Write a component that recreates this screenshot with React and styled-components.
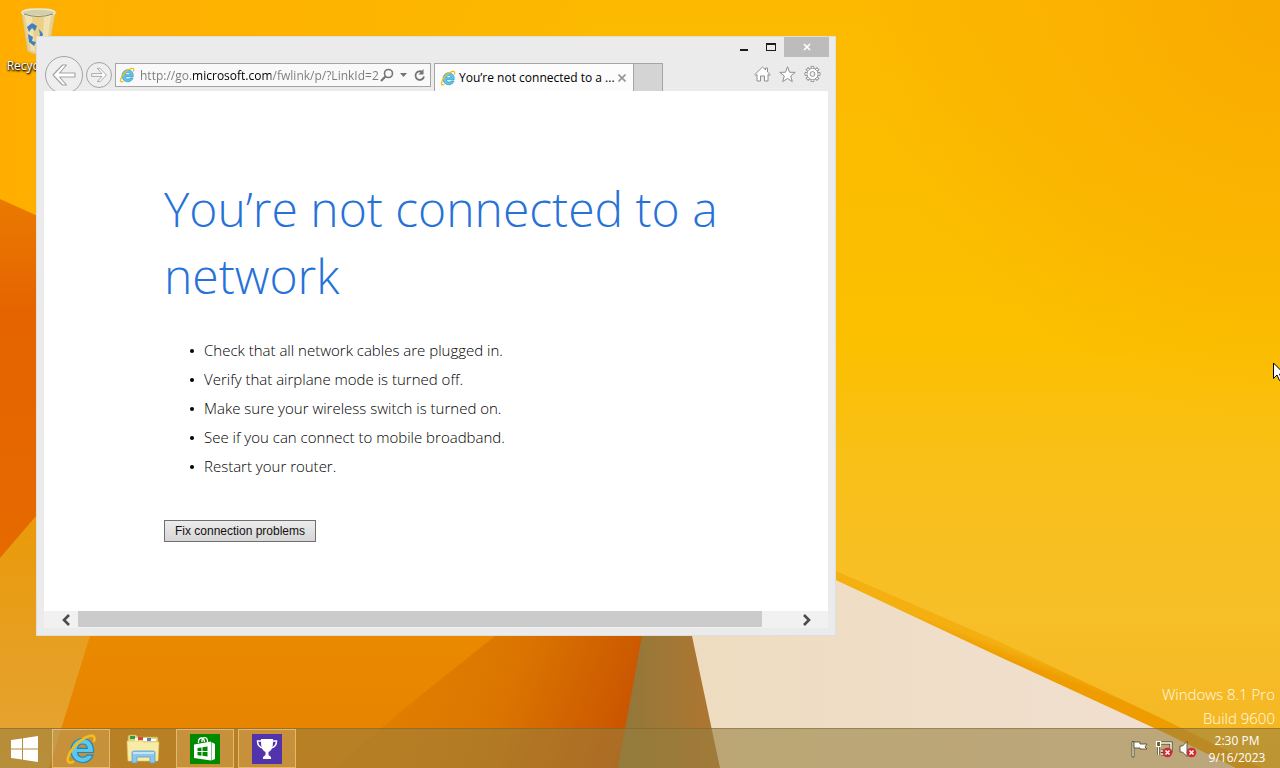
import React from "react";
import styled, { createGlobalStyle } from "styled-components";

const GlobalStyle = createGlobalStyle`
  *, *::before, *::after { box-sizing: border-box; }
  html, body { margin: 0; height: 100%; }
  body { font-family: "Open Sans", "Noto Sans", sans-serif; font-size: 12px; overflow: hidden; }
  button, input { font: inherit; margin: 0; padding: 0; border: 0; background: none; }
  h1, ul, p { margin: 0; padding: 0; }
  svg { display: block; flex: none; }
`;

const Screen = styled.div`
  position: relative;
  isolation: isolate;
  display: flex;
  flex-direction: column;
  min-height: 100vh;
  overflow: hidden;
`;

const WallpaperArt = styled.svg`
  position: absolute;
  inset: 0;
  z-index: -1;
  width: 100%;
  height: 100%;
`;

const Desktop = styled.main`
  position: relative;
  flex: 1;
`;

const DesktopIcon = styled.button`
  display: flex;
  flex-direction: column;
  align-items: center;
  gap: 2px;
  width: 76px;
  padding-top: 6px;
  color: #fff;
  line-height: 16px;
  text-shadow: 0 1px 2px #000, 1px 1px 2px #000;
`;

const Window = styled.section`
  position: absolute;
  left: 36px;
  top: 36px;
  width: 800px;
  display: flex;
  flex-direction: column;
  padding: 0 7px 7px;
  background: #ebebeb;
  border: 1px solid #dedede;
`;

const TitleBar = styled.header`
  display: flex;
  justify-content: flex-end;
  height: 18px;
  margin-right: -1px;
`;

const CaptionButton = styled.button`
  display: grid;
  place-items: center;
  width: ${(p) => (p.$close ? 45 : 27)}px;
  height: 20px;
  color: ${(p) => (p.$close ? "#fff" : "#1c1c1c")};
  background: ${(p) => (p.$close ? "#bcbcbc" : "transparent")};
`;

const Toolbar = styled.div`
  display: flex;
  align-items: flex-start;
  height: 36px;
  padding-top: 8px;
  overflow: hidden;
`;

const NavButtons = styled.div`
  display: flex;
  align-items: center;
  gap: 3px;
  width: 71px;
  height: 24px;
  padding-left: 1px;
`;

const NavButton = styled.button`
  display: grid;
  place-items: center;
  flex: none;
  width: ${(p) => p.$size}px;
  height: ${(p) => p.$size}px;
  border: 1px solid #a3a3a3;
  border-radius: 50%;
  background: #eeeeee;
`;

const AddressBar = styled.form`
  display: flex;
  align-items: center;
  width: 316px;
  height: 24px;
  margin-right: 3px;
  padding: 0 3px;
  background: #f9f9f9;
  border: 1px solid #a5a5a5;
`;

const AddressInput = styled.input`
  flex: 1;
  min-width: 0;
  height: 20px;
  margin-left: 5px;
  outline: 0;
  color: #6f6f6f;
  background: linear-gradient(90deg, #7a7a7a 52px, #000 52px 131px, #7a7a7a 131px);
  background-clip: text;
  -webkit-background-clip: text;
  -webkit-text-fill-color: transparent;
`;

const IconButton = styled.button`
  display: grid;
  place-items: center;
  width: ${(p) => p.$w || 16}px;
  height: 20px;
`;

const Tab = styled.div`
  display: flex;
  align-items: center;
  width: 200px;
  height: 28px;
  padding: 0 5px;
  background: #fcfcfc;
  border: 1px solid #a5a5a5;
  border-bottom: 0;
`;

const TabTitle = styled.span`
  flex: 1;
  min-width: 0;
  margin-left: 3px;
  overflow: hidden;
  white-space: nowrap;
  color: #000;
`;

const NewTab = styled.button`
  width: 29px;
  height: 28px;
  background: #d4d4d4;
  border: 1px solid #a5a5a5;
  border-left: 0;
  border-bottom: 0;
`;

const Commands = styled.nav`
  display: flex;
  gap: 8px;
  height: 22px;
  margin-left: auto;
  padding-right: 7px;
  align-items: center;
`;

const Page = styled.article`
  padding: 84px 100px 69px 120px;
  background: #fff;
`;

const Heading = styled.h1`
  color: #2672d9;
  font-size: 48px;
  font-weight: 300;
  line-height: 67px;
`;

const Tips = styled.ul`
  margin: 27px 0 39px;
  list-style: none;
  color: #000;
  font-size: 15px;
  font-weight: 300;
  line-height: 29px;
`;

const Tip = styled.li`
  display: flex;
  align-items: center;
  gap: 10px;
  padding-left: 26px;

  &::before {
    content: "";
    width: 4px;
    height: 4px;
    border-radius: 50%;
    background: #000;
  }
`;

const FixButton = styled.button`
  width: 152px;
  height: 22px;
  color: #111;
  font-family: "Liberation Sans", Arial, sans-serif;
  font-size: 12px;
  line-height: 18px;
  background: linear-gradient(#ececec, #d6d6d6);
  border: 1px solid #707070;
`;

const ScrollBar = styled.div`
  display: flex;
  height: 17px;
  padding: 0 9px;
  background: #f1f1f1;
`;

const ScrollTrack = styled.div`
  flex: 1;
  padding-right: 32px;
`;

const ScrollThumb = styled.div`
  height: 16px;
  background: #cbcbcb;
`;

const ScrollArrow = styled.button`
  display: grid;
  place-items: center;
  width: 25px;
  height: 17px;
`;

const Watermark = styled.div`
  position: absolute;
  right: 5px;
  bottom: -2px;
  color: #fffbe6;
  font-size: 15px;
  font-weight: 300;
  line-height: 24px;
  text-align: right;
`;

const Pointer = styled.svg`
  position: absolute;
  right: -6px;
  top: 362px;
`;

const Taskbar = styled.footer`
  display: flex;
  align-items: stretch;
  height: 40px;
  background: rgba(150, 126, 62, 0.58);
  border-top: 1px solid rgba(110, 90, 40, 0.45);
`;

const TaskButtons = styled.div`
  display: flex;
  flex: 1;
  gap: 4px;
`;

const StartButton = styled.button`
  display: grid;
  place-items: center;
  width: 48px;
`;

const TaskButton = styled.button`
  display: grid;
  place-items: center;
  width: 58px;
  height: 39px;
  border: 1px solid ${(p) => (p.$open ? "rgba(255, 225, 165, 0.5)" : "transparent")};
  background: ${(p) => (p.$open ? "rgba(255, 215, 150, 0.2)" : "transparent")};
`;

const Tray = styled.div`
  display: flex;
  align-items: center;
  gap: 6px;
  padding-right: 14px;
  color: #fff;
`;

const TrayButton = styled.button`
  width: 18px;
  height: 18px;
`;

const Clock = styled.button`
  width: 58px;
  margin-left: 5px;
  color: #fff;
  font-size: 12px;
  line-height: 17px;
  text-align: center;
  white-space: nowrap;
`;

function Wallpaper() {
  return (
    <WallpaperArt viewBox="0 0 1280 768" preserveAspectRatio="none" aria-hidden="true">
      <defs>
        <linearGradient id="sky" x1="0" y1="0" x2="0" y2="1">
          <stop offset="0" stopColor="#fcb900" />
          <stop offset=".45" stopColor="#fbc000" />
          <stop offset=".6" stopColor="#f9c018" />
          <stop offset=".8" stopColor="#f7bf28" />
          <stop offset="1" stopColor="#f4b524" />
        </linearGradient>
        <radialGradient id="corner" cx="1280" cy="0" r="420" gradientUnits="userSpaceOnUse">
          <stop offset="0" stopColor="#f9ab00" />
          <stop offset="1" stopColor="#f9ab00" stopOpacity="0" />
        </radialGradient>
        <linearGradient id="leftGlow" x1="0" y1="0" x2="600" y2="0" gradientUnits="userSpaceOnUse">
          <stop offset="0" stopColor="#ffae00" />
          <stop offset="1" stopColor="#ffae00" stopOpacity="0" />
        </linearGradient>
        <linearGradient id="leftFold" x1="0" y1="0" x2="0" y2="1">
          <stop offset="0" stopColor="#ea7a00" />
          <stop offset=".3" stopColor="#e56400" />
          <stop offset="1" stopColor="#e66a00" />
        </linearGradient>
        <linearGradient id="sand" x1="0" y1="0" x2="0" y2="1">
          <stop offset="0" stopColor="#ea9a05" />
          <stop offset=".3" stopColor="#ea9a0a" />
          <stop offset="1" stopColor="#e4a437" />
        </linearGradient>
        <linearGradient id="floor" x1="0" y1="0" x2="0" y2="1">
          <stop offset="0" stopColor="#ec9300" />
          <stop offset="1" stopColor="#e78200" />
        </linearGradient>
        <linearGradient id="shade" x1="430" y1="620" x2="650" y2="700" gradientUnits="userSpaceOnUse">
          <stop offset="0" stopColor="#e07e00" />
          <stop offset=".4" stopColor="#db7500" />
          <stop offset="1" stopColor="#c85200" />
        </linearGradient>
        <linearGradient id="brown" x1="628" y1="0" x2="700" y2="0" gradientUnits="userSpaceOnUse">
          <stop offset="0" stopColor="#93783a" />
          <stop offset="1" stopColor="#ab7632" />
        </linearGradient>
        <linearGradient id="cream" x1="0" y1="0" x2="1" y2="0">
          <stop offset="0" stopColor="#eedcc0" />
          <stop offset="1" stopColor="#f1e0d2" />
        </linearGradient>
        <linearGradient id="fold" x1="1000" y1="645" x2="996" y2="656" gradientUnits="userSpaceOnUse">
          <stop offset="0" stopColor="#f3b010" />
          <stop offset="1" stopColor="#ee9c00" />
        </linearGradient>
      </defs>
      <rect width="1280" height="768" fill="url(#sky)" />
      <rect width="1280" height="768" fill="url(#corner)" />
      <rect width="600" height="768" fill="url(#leftGlow)" />
      <path d="M0 199L80 235V480L0 570Z" fill="url(#leftFold)" />
      <path d="M0 558L36 516L120 420V768H0Z" fill="url(#sand)" />
      <path d="M140 480H692V768H49L90 636Z" fill="url(#floor)" />
      <path d="M495 636L400 712L335 768H700V500Z" fill="url(#shade)" />
      <path d="M660 530L642 636L618 768H722L670 530Z" fill="url(#brown)" />
      <path d="M670 530L692 636L720 768H1238L1165 731L836 580L760 545Z" fill="url(#cream)" />
      <path d="M836 571L1000 642L1165 720L1262 768H1236L1165 733L1000 657L836 580Z" fill="url(#fold)" />
    </WallpaperArt>
  );
}

function IeLogo({ size }) {
  return (
    <svg width={size} height={size} viewBox="0 0 32 32" aria-hidden="true">
      <path
        d="M28.500 19.500H12.500C12.800 22.500 15 24.200 18 24.200C20 24.200 21.400 23.500 22.200 22.200H28C26.300 26.800 22.500 29.500 17.800 29.500C11.200 29.500 6 24.600 6 17.600C6 10.600 11.300 5.500 17.700 5.500C24.600 5.500 29 11 28.500 19.500ZM12.600 15.300H22.300C22 12.600 20.200 11 17.500 11C14.900 11 13 12.600 12.600 15.300Z"
        fill="#5cc8ee"
        stroke="#1f86bd"
        strokeWidth="1.200"
        fillRule="evenodd"
      />
      <path
        d="M29 8C30.500 4 28.500 1.800 24.500 2.900C15 5.500 4 18 2.800 25.800C2.300 29.300 4.500 30.500 8 28.800"
        fill="none"
        stroke="#f5bd19"
        strokeWidth="2.600"
        strokeLinecap="round"
      />
    </svg>
  );
}

function RecycleBinIcon() {
  return (
    <svg width="48" height="50" viewBox="0 0 48 50" aria-hidden="true">
      <path d="M8 6L14 45Q24 51 34 45L41 6Z" fill="#e3dcb4" fillOpacity=".75" stroke="#cfc9ae" />
      <path d="M11 10L17 44L21 46L18 10ZM30 10L28 46L32 44L37 10Z" fill="#fff" fillOpacity=".35" />
      <ellipse cx="24.500" cy="6.500" rx="16.500" ry="3.500" fill="#d3cfa6" stroke="#ece8da" strokeWidth="1.500" />
      <path d="M10 8Q24 13 39 8" fill="none" stroke="#84875d" />
      <path d="M13 21L18 17L23 20L21 25L18 22L15 26ZM25 23L29 28L27 34H23L26 29ZM14 28L19 31L18 35L22 36L20 40L15 36Z" fill="#3f7fc4" />
    </svg>
  );
}

function NavArrow({ size, flip }) {
  return (
    <svg width={size} height={size} viewBox="0 0 24 24" aria-hidden="true">
      <path
        transform={flip ? "matrix(-1 0 0 1 24 0)" : undefined}
        d="M1 12L10.500 2H14.500L7.500 10H23V14H7.500L14.500 22H10.500Z"
        fill="#fff"
        stroke="#a3a3a3"
        strokeWidth={flip ? 1.4 : 1.1}
        strokeLinejoin="round"
      />
    </svg>
  );
}

const GEAR_TEETH = [0, 45, 90, 135, 180, 225, 270, 315];

function GearIcon() {
  return (
    <svg width="17" height="18" viewBox="0 0 18 18" aria-hidden="true">
      <g stroke="#8f8f8f" fill="#fff">
        {GEAR_TEETH.map((angle) => (
          <path key={angle} d="M7.500 4V1H10.500V4" transform={`rotate(${angle} 9 9)`} />
        ))}
        <circle cx="9" cy="9" r="5.700" />
      </g>
      <path d="M9 3.800A5.200 5.200 0 1 1 8.990 3.800Z" fill="#fff" />
      <circle cx="9" cy="9" r="2.600" fill="#efefef" stroke="#8f8f8f" />
    </svg>
  );
}

function ErrorBadge() {
  return (
    <g>
      <circle cx="12.500" cy="12.500" r="4.800" fill="#cf2b34" />
      <path d="M10.500 10.500L14.500 14.500M14.500 10.500L10.500 14.500" stroke="#fff" strokeWidth="1.500" />
    </g>
  );
}

function FolderIcon() {
  return (
    <svg width="34" height="30" viewBox="0 0 34 30" aria-hidden="true">
      <path d="M2 6V3Q2 1 4 1H10L12 3H31Q32 3 32 5V26H2Z" fill="#e8d57c" stroke="#bfa64f" strokeWidth=".6" />
      <path d="M4 2H9V5H4Z" fill="#2e9b4b" />
      <path d="M12 3H17V6H12Z" fill="#d8453a" />
      <path d="M21 4H25V7H21Z" fill="#4589c9" />
      <path d="M9 4H12V7H9ZM17 4H21V7H17ZM25 5H30V7H25Z" fill="#fff" />
      <path d="M1 7H16L18 8H33L32 27H2Z" fill="#f7eba5" stroke="#dcc670" strokeWidth=".6" />
      <path d="M6 29V19Q6 17 8 17H27Q29 17 29 19V29H24V23H11V29Z" fill="#8dc6ea" stroke="#5aa0cf" strokeWidth=".8" />
      <path d="M7 19H28" stroke="#d5eefb" strokeWidth="1.500" />
    </svg>
  );
}

const TIPS = [
  "Check that all network cables are plugged in.",
  "Verify that airplane mode is turned off.",
  "Make sure your wireless switch is turned on.",
  "See if you can connect to mobile broadband.",
  "Restart your router.",
];

function BrowserWindow() {
  return (
    <Window aria-label="Internet Explorer">
      <TitleBar>
        <CaptionButton aria-label="Minimize">
          <svg width="8" height="12" viewBox="0 0 8 12"><path d="M0 8H8V10H0Z" fill="currentColor" /></svg>
        </CaptionButton>
        <CaptionButton aria-label="Maximize">
          <svg width="10" height="8" viewBox="0 0 10 8"><path d="M0 0H10V8H0ZM1 2V7H9V2Z" fill="currentColor" fillRule="evenodd" /></svg>
        </CaptionButton>
        <CaptionButton $close aria-label="Close">
          <svg width="8" height="8" viewBox="0 0 8 8"><path d="M1 1L7 7M7 1L1 7" stroke="currentColor" strokeWidth="1.700" /></svg>
        </CaptionButton>
      </TitleBar>
      <Toolbar>
        <NavButtons>
          <NavButton $size={38} aria-label="Back"><NavArrow size={24} /></NavButton>
          <NavButton $size={26} aria-label="Forward"><NavArrow size={16} flip /></NavButton>
        </NavButtons>
        <AddressBar>
          <IeLogo size={16} />
          <AddressInput aria-label="Address" defaultValue="http://go.microsoft.com/fwlink/p/?LinkId=2" />
          <IconButton type="button" aria-label="Search">
            <svg width="14" height="14" viewBox="0 0 14 14" fill="none" stroke="#747474">
              <circle cx="8.500" cy="5.500" r="4" strokeWidth="1.600" />
              <path d="M5.500 8.500L1 13" strokeWidth="2.200" />
            </svg>
          </IconButton>
          <IconButton type="button" aria-label="Show address history">
            <svg width="7" height="4" viewBox="0 0 7 4"><path d="M0 0H7L3.500 4Z" fill="#747474" /></svg>
          </IconButton>
          <IconButton type="button" aria-label="Refresh">
            <svg width="13" height="13" viewBox="0 0 13 13">
              <path d="M9.500 3.200A4.300 4.300 0 1 0 11 7.500" fill="none" stroke="#747474" strokeWidth="1.800" />
              <path d="M10.500 0V5.500H5.500Z" fill="#747474" />
            </svg>
          </IconButton>
        </AddressBar>
        <Tab>
          <IeLogo size={16} />
          <TabTitle>You’re not connected to a ...</TabTitle>
          <IconButton $w={12} aria-label="Close tab">
            <svg width="8" height="8" viewBox="0 0 8 8"><path d="M0.500 0.500L7.500 7.500M7.500 0.500L0.500 7.500" stroke="#949494" strokeWidth="1.600" /></svg>
          </IconButton>
        </Tab>
        <NewTab aria-label="New tab" />
        <Commands aria-label="Browser commands">
          <IconButton $w={17} aria-label="Home">
            <svg width="17" height="16" viewBox="0 0 17 16" fill="#fff" stroke="#8f8f8f" strokeLinejoin="round">
              <path d="M0.800 8.500L8.500 1L11.500 4V2H13.500V6L16.200 8.500L15.300 9.500L14 8.500V15H10.500V10H6.500V15H3V8.500L1.700 9.500Z" />
            </svg>
          </IconButton>
          <IconButton $w={17} aria-label="Favorites">
            <svg width="17" height="17" viewBox="0 0 17 17" fill="#fff" stroke="#8f8f8f" strokeLinejoin="round">
              <path d="M8.500 0.800L10.500 6.200L16.200 6.400L11.700 9.900L13.300 15.600L8.500 12.400L3.700 15.600L5.300 9.900L0.800 6.400L6.500 6.200Z" />
            </svg>
          </IconButton>
          <IconButton $w={17} aria-label="Tools"><GearIcon /></IconButton>
        </Commands>
      </Toolbar>
      <Page>
        <Heading>You’re not connected to a network</Heading>
        <Tips>{TIPS.map((tip) => <Tip key={tip}>{tip}</Tip>)}</Tips>
        <FixButton>Fix connection problems</FixButton>
      </Page>
      <ScrollBar>
        <ScrollArrow aria-label="Scroll left">
          <svg width="9" height="12" viewBox="0 0 9 12"><path d="M8 1L3 6L8 11" fill="none" stroke="#4b4b4b" strokeWidth="2.600" /></svg>
        </ScrollArrow>
        <ScrollTrack><ScrollThumb /></ScrollTrack>
        <ScrollArrow aria-label="Scroll right">
          <svg width="9" height="12" viewBox="0 0 9 12"><path d="M2 1L7 6L2 11" fill="none" stroke="#4b4b4b" strokeWidth="2.600" /></svg>
        </ScrollArrow>
      </ScrollBar>
    </Window>
  );
}

export default function App() {
  return (
    <Screen>
      <GlobalStyle />
      <Wallpaper />
      <Desktop>
        <DesktopIcon>
          <RecycleBinIcon />
          Recycle Bin
        </DesktopIcon>
        <BrowserWindow />
        <Watermark>
          <p>Windows 8.1 Pro</p>
          <p>Build 9600</p>
        </Watermark>
        <Pointer width="13" height="20" viewBox="0 0 13 20" aria-hidden="true">
          <path d="M0.500 1V16.500L4 13L6.500 18.500L9 17.500L6.500 12H11.500Z" fill="#fff" stroke="#000" />
        </Pointer>
      </Desktop>
      <Taskbar>
        <TaskButtons>
          <StartButton aria-label="Start">
            <svg width="27" height="26" viewBox="0 0 27 26" fill="#fff">
              <path d="M0 4L11 2.400V12.400H0ZM12 2.200L27 0V12.400H12ZM0 13.400H11V23.500L0 22ZM12 13.400H27V26L12 23.700Z" />
            </svg>
          </StartButton>
          <TaskButton $open aria-label="Internet Explorer"><IeLogo size={32} /></TaskButton>
          <TaskButton aria-label="File Explorer"><FolderIcon /></TaskButton>
          <TaskButton $open aria-label="Store">
            <svg width="30" height="30" viewBox="0 0 30 30">
              <rect width="30" height="30" fill="#008a00" />
              <path d="M8.500 9V7Q9 4 11.500 4T14.500 8M12 8V6Q12.500 3.500 15 3.700T17.500 8" fill="none" stroke="#fff" strokeWidth="1.300" />
              <path d="M4 10.500L21 7.500V26.500L4 24Z" fill="#fff" />
              <path d="M21.500 8L25 10V25L21.500 26.500Z" fill="#fff" />
              <path d="M7.500 14L11.500 13.500V17H7.500ZM12.500 13.300L17.500 12.500V17H12.500ZM7.500 18H11.500V21.700L7.500 21.200ZM12.500 18H17.500V22.500L12.500 21.800Z" fill="#008a00" />
            </svg>
          </TaskButton>
          <TaskButton $open aria-label="Achievements">
            <svg width="30" height="30" viewBox="0 0 30 30">
              <rect width="30" height="30" fill="#5133ab" />
              <path d="M9 5H21V8Q21 16 16.500 18V21L19 23V25H11V23L13.500 21V18Q9 16 9 8Z" fill="#fff" />
              <path d="M9 7H5.500Q5.500 13 11 14M21 7H24.500Q24.500 13 19 14" fill="none" stroke="#fff" strokeWidth="1.500" />
            </svg>
          </TaskButton>
        </TaskButtons>
        <Tray>
          <TrayButton aria-label="Action Center">
            <svg width="18" height="18" viewBox="0 0 18 18" fill="#fff" stroke="#4a3d1c" strokeWidth=".8">
              <path d="M1 1.500H3V17H1Z" />
              <path d="M3 2H9V4H16L14 7L16 9H9V8H3Z" />
            </svg>
          </TrayButton>
          <TrayButton aria-label="Network">
            <svg width="18" height="18" viewBox="0 0 18 18">
              <path d="M6 3H16V11H6M3.500 6V15M6 14H9" fill="none" stroke="#4a3d1c" strokeWidth="3" />
              <path d="M6 3H16V11H6M3.500 6V15M6 14H9" fill="none" stroke="#fff" strokeWidth="1.500" />
              <path d="M1.500 1.500H5.500V6.500H1.500Z" fill="#6d5a2c" stroke="#fff" strokeWidth="1.200" />
              <ErrorBadge />
            </svg>
          </TrayButton>
          <TrayButton aria-label="Volume muted">
            <svg width="18" height="18" viewBox="0 0 18 18">
              <path d="M1 6H3.500L8 1.500V16.500L3.500 12H1Z" fill="#fff" stroke="#4a3d1c" strokeWidth=".8" />
              <ErrorBadge />
            </svg>
          </TrayButton>
          <Clock>2:30 PM<br />9/16/2023</Clock>
        </Tray>
      </Taskbar>
    </Screen>
  );
}
